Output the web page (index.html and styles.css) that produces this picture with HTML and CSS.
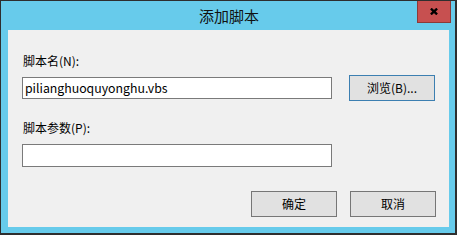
FILE: index.html
```html
<!DOCTYPE html>
<html lang="zh">
<head>
<meta charset="utf-8">
<link rel="stylesheet" href="styles.css">
</head>
<body>
<div class="window">
  <div class="titlebar">
    <span class="title">添加脚本</span>
    <button class="close" aria-label="关闭">
      <svg width="8" height="7" viewBox="0 0 8 7"><path d="M0.9 0.6 L7.1 6.4 M7.1 0.6 L0.9 6.4" stroke="#000" stroke-width="2.3" fill="none"/></svg>
    </button>
  </div>
  <div class="content">
    <label class="label first">脚本名(N):</label>
    <div class="row">
      <div class="input">pilianghuoquyonghu.vbs</div>
      <button class="btn focus">浏览(B)...</button>
    </div>
    <label class="label second">脚本参数(P):</label>
    <div class="input wide"></div>
    <div class="actions">
      <button class="btn">确定</button>
      <button class="btn">取消</button>
    </div>
  </div>
</div>
</body>
</html>
```

FILE: styles.css
```css
* { box-sizing: border-box; }
html, body { margin: 0; padding: 0; background: #ffffff; }
body {
  font-family: "Noto Sans CJK SC", "Noto Sans", sans-serif;
  font-size: 12px;
  color: #000;
}
.window {
  width: 457px;
  height: 235px;
  background: #67cbeb;
  border-style: solid;
  border-color: #2e2e2e;
  border-width: 1px 2px 2px 1px;
  padding: 0 6px 6px 7px;
  display: flex;
  flex-direction: column;
  position: relative;
}
.titlebar {
  height: 29px;
  display: flex;
  align-items: center;
  justify-content: center;
  flex: none;
}
.title {
  font-size: 15px;
  line-height: 20px;
  color: #111;
  margin-left: 1px;
}
.close {
  position: absolute;
  top: 0;
  right: 4px;
  width: 34px;
  height: 22px;
  background: #c75050;
  border: 1px solid #8c3a38;
  border-top: none;
  padding: 0;
  display: flex;
  align-items: center;
  justify-content: center;
}
.close svg { display: block; margin-top: -1px; }
.content {
  flex: 1;
  background: #f0f0f0;
  padding: 23px 13px 10px 14px;
  display: flex;
  flex-direction: column;
}
.label {
  display: block;
  line-height: 16px;
  height: 16px;
  margin-left: 1px;
}
.label.second { margin-top: 19px; }
.row {
  display: flex;
  align-items: center;
  gap: 17px;
  margin-top: 6px;
  height: 26px;
}
.input {
  width: 310px;
  height: 22px;
  background: #fff;
  border: 1px solid #7a7a7a;
  padding: 0 2px;
  line-height: 20px;
  font-size: 12.3px;
  color: #000;
}
.input.wide { margin-top: 8px; height: 23px; }
.btn {
  width: 86px;
  height: 26px;
  background: #e1e1e1;
  border: 1px solid #767676;
  font-family: inherit;
  font-size: 12px;
  color: #000;
  padding: 0;
  line-height: 22px;
}
.btn.focus { border-color: #3c7fb1; }
.actions {
  display: flex;
  justify-content: flex-end;
  gap: 13px;
  margin-top: 24px;
  margin-right: 0;
}
```
